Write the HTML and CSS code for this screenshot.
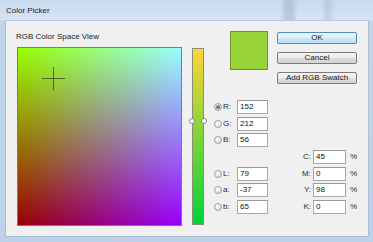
FILE: index.html
```html
<!DOCTYPE html>
<html>
<head>
<meta charset="utf-8">
<link rel="stylesheet" href="styles.css">
</head>
<body>
<div class="window">
  <div class="titlebar">Color Picker</div>
  <div class="client">
    <div class="left-col">
      <div class="caption">RGB Color Space View</div>
      <div class="field">
        <svg class="cross" width="24" height="24" viewBox="0 0 24 24">
          <line x1="0" y1="11.5" x2="23" y2="11.5" stroke="#3d5218" stroke-width="1" stroke-opacity="0.85"/>
          <line x1="11.5" y1="0" x2="11.5" y2="23" stroke="#3d5218" stroke-width="1" stroke-opacity="0.85"/>
        </svg>
      </div>
    </div>
    <div class="slider-col">
      <div class="slider">
        <span class="knob knob-l"></span>
        <span class="knob knob-r"></span>
      </div>
    </div>
    <div class="right">
      <div class="top">
        <div class="swatch"></div>
        <div class="buttons">
          <div class="btn btn-default">OK</div>
          <div class="btn">Cancel</div>
          <div class="btn">Add RGB Swatch</div>
        </div>
      </div>
      <div class="grid">
        <span class="radio on r1"></span><span class="lbl r1 c2">R:</span><span class="inp r1 c3">152</span>
        <span class="radio r2"></span><span class="lbl r2 c2">G:</span><span class="inp r2 c3">212</span>
        <span class="radio r3"></span><span class="lbl r3 c2">B:</span><span class="inp r3 c3">56</span>

        <span class="rlbl r4">C:</span><span class="inp r4 c5">45</span><span class="pct r4">%</span>

        <span class="radio r5"></span><span class="lbl r5 c2">L:</span><span class="inp r5 c3">79</span>
        <span class="rlbl r5">M:</span><span class="inp r5 c5">0</span><span class="pct r5">%</span>

        <span class="radio r6"></span><span class="lbl r6 c2">a:</span><span class="inp r6 c3">-37</span>
        <span class="rlbl r6">Y:</span><span class="inp r6 c5">98</span><span class="pct r6">%</span>

        <span class="radio r7"></span><span class="lbl r7 c2">b:</span><span class="inp r7 c3">65</span>
        <span class="rlbl r7">K:</span><span class="inp r7 c5">0</span><span class="pct r7">%</span>
      </div>
    </div>
  </div>
</div>
</body>
</html>
```

FILE: styles.css
```css
* { box-sizing: border-box; }
html, body { margin: 0; padding: 0; }
body {
  font-family: "Liberation Sans", Arial, sans-serif;
  font-size: 8px;
  color: #1c1c1c;
  background: #c3d6eb;
}
.window {
  width: 373px;
  height: 242px;
  background: linear-gradient(to bottom, #c8daee 0, #d3e1f1 20px, #c2d5ea 21px, #bdd1e8 100%);
  overflow: hidden;
}
.titlebar {
  height: 20px;
  line-height: 20px;
  padding: 1px 0 0 6px;
  color: #1e1e1e;
  background:
    linear-gradient(90deg, transparent 280px, rgba(95,115,140,0.22) 286px, rgba(95,115,140,0.22) 292px, transparent 298px, transparent 322px, rgba(95,115,140,0.18) 327px, transparent 336px),
    linear-gradient(to bottom, #c9dbef, #d6e4f3);
}
.client {
  margin: 0 4px 0 5px;
  width: 364px;
  height: 217px;
  background: #f0f0f0;
  border: 1px solid #a9bdd4;
  border-top-color: #b7c9dd;
  display: flex;
  align-items: flex-start;
  padding: 10px 0 0 11px;
}
.left-col {
  width: 165px;
  display: flex;
  flex-direction: column;
}
.caption {
  height: 12px;
  line-height: 12px;
  margin: 0 0 4px -1px;
  color: #222;
}
.field {
  position: relative;
  width: 165px;
  height: 179px;
  border: 1px solid #6f7f8f;
  background:
    linear-gradient(to bottom, rgb(0,255,0), rgb(0,0,0)),
    linear-gradient(to right, rgb(152,0,0), rgb(152,0,255));
  background-blend-mode: lighten;
}
.cross {
  position: absolute;
  left: 24px;
  top: 19px;
}
.slider-col {
  margin-left: 10px;
  padding-top: 17px;
}
.slider {
  position: relative;
  width: 12px;
  height: 177px;
  border: 1px solid #8d8d72;
  background: linear-gradient(to bottom, rgb(255,212,56), rgb(0,212,56));
}
.knob {
  position: absolute;
  top: 69px;
  width: 6px;
  height: 6px;
  border-radius: 50%;
  background: #fff;
  border: 1px solid #8a8a8a;
}
.knob-l { left: -4px; }
.knob-r { right: -4px; }
.right {
  margin-left: 9px;
  display: flex;
  flex-direction: column;
}
.top {
  display: flex;
  align-items: flex-start;
}
.swatch {
  margin-left: 17px;
  width: 38px;
  height: 39px;
  background: rgb(152,212,56);
  border: 1px solid #70903e;
}
.buttons {
  margin-left: 9px;
  margin-top: 1px;
  display: flex;
  flex-direction: column;
  gap: 8px;
}
.btn {
  width: 80px;
  height: 12px;
  line-height: 10px;
  text-align: center;
  color: #151515;
  border: 1px solid #7a7a7a;
  border-radius: 2px;
  background: linear-gradient(to bottom, #f4f4f4 0%, #ececec 50%, #dedede 50%, #d2d2d2 100%);
}
.btn-default {
  border-color: #4a8bbf;
  background: linear-gradient(to bottom, #edf6fc 0%, #deeffa 50%, #cbe6f7 50%, #bcdff4 100%);
}
.grid {
  margin-top: 16px;
  display: grid;
  grid-template-columns: 10px 14px 31px 45px 33px 12px;
  grid-template-rows: repeat(7, 14px);
  row-gap: 2.667px;
  align-items: center;
}
.r1 { grid-row: 1; }
.r2 { grid-row: 2; }
.r3 { grid-row: 3; }
.r4 { grid-row: 4; }
.r5 { grid-row: 5; }
.r6 { grid-row: 6; }
.r7 { grid-row: 7; }
.c2 { grid-column: 2; }
.c3 { grid-column: 3; }
.c5 { grid-column: 5; }
.radio {
  grid-column: 1;
  position: relative;
  width: 8px;
  height: 8px;
  margin-left: 1px;
  border-radius: 50%;
  border: 1px solid #a0a0a0;
  background: radial-gradient(circle at 40% 35%, #ffffff 0%, #e6e6e6 55%, #cfcfcf 100%);
}
.radio.on::after {
  content: "";
  position: absolute;
  left: 1px;
  top: 1px;
  width: 4px;
  height: 4px;
  border-radius: 50%;
  background: radial-gradient(circle at 40% 35%, #7f98a8, #2f4656);
}
.lbl {
  line-height: 14px;
  padding-left: 0;
  color: #2a2a2a;
}
.rlbl {
  grid-column: 4;
  line-height: 14px;
  text-align: right;
  padding-right: 2px;
  color: #2a2a2a;
}
.inp {
  height: 14px;
  line-height: 12px;
  padding-left: 2px;
  background: #fff;
  border: 1px solid #a8a8a8;
  border-top-color: #9a9a9a;
  color: #111;
}
.pct {
  grid-column: 6;
  line-height: 14px;
  padding-left: 4px;
  color: #2a2a2a;
}
```
